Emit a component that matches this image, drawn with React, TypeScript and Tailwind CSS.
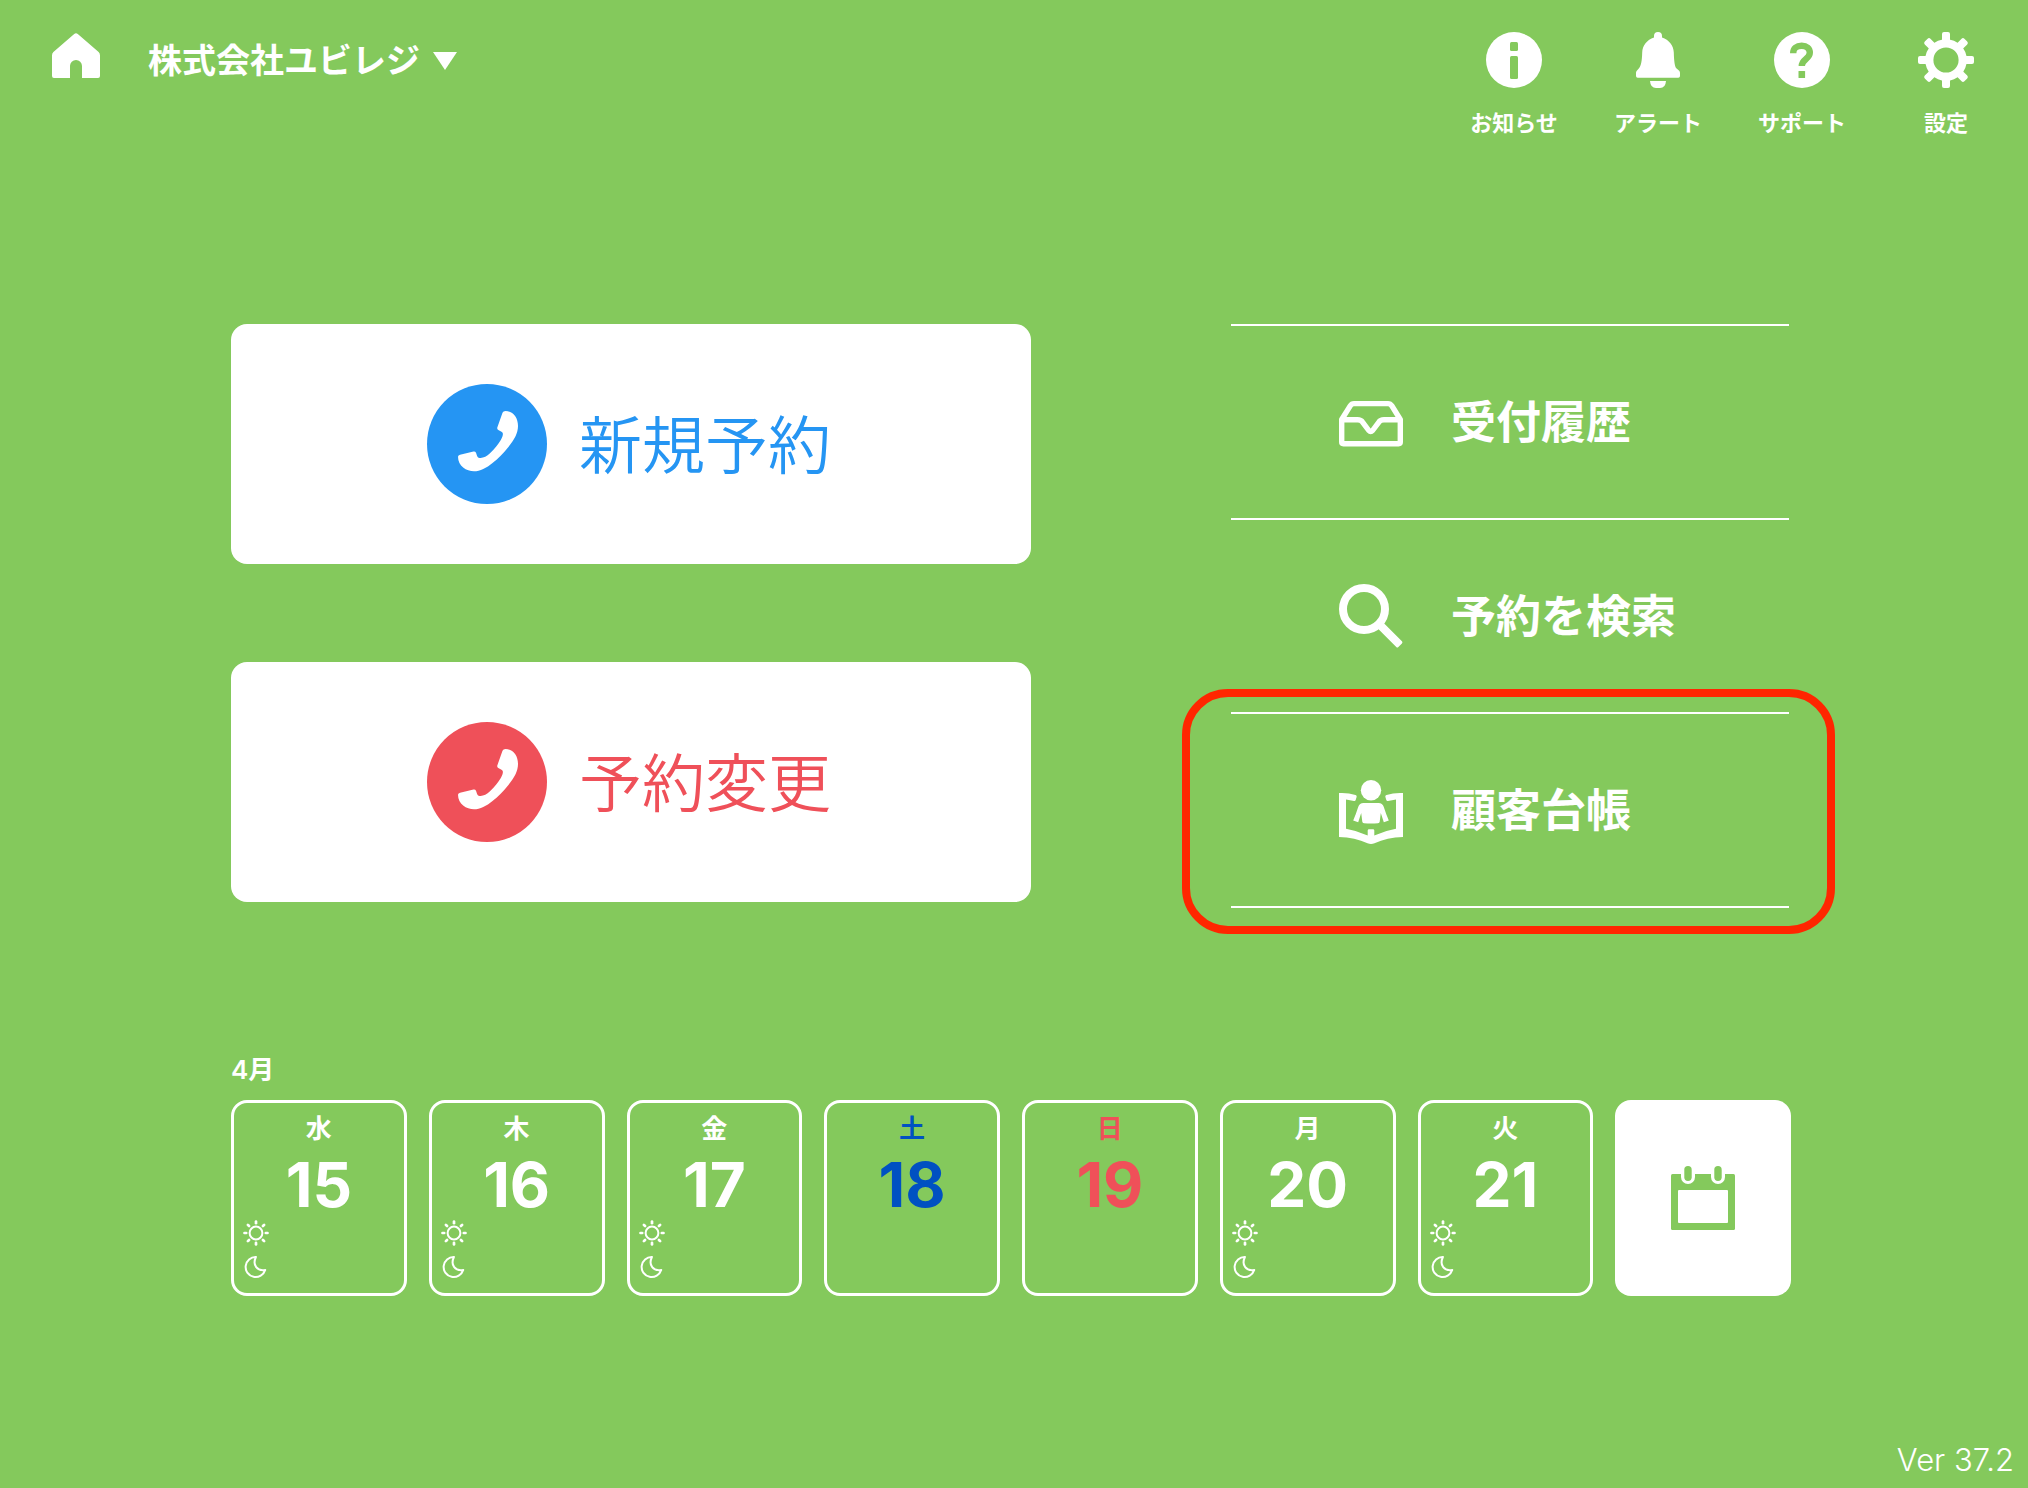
import type { ReactNode } from "react";

const TEETH = [0, 45, 90, 135, 180, 225, 270, 315];

function HomeIcon() {
  return (
    <svg viewBox="0 -1 48 46" className="h-[46px] w-12" fill="currentColor" aria-hidden="true">
      <path d="M22.2 1Q24-.6 25.8 1L46.6 19Q48 20.400 48 22.400V43Q48 45 46 45H30V33A6 6 0 0 0 18 33V45H2Q0 45 0 43V22.400Q0 20.400 1.400 19Z" />
    </svg>
  );
}

function InfoIcon() {
  return (
    <svg viewBox="0 0 56 56" className="size-14" aria-hidden="true">
      <circle cx="28" cy="28" r="28" fill="#fff" />
      <rect x="24" y="10" width="8" height="9" rx="1.500" fill="#84c95c" />
      <rect x="24" y="24" width="8" height="23" rx="1.500" fill="#84c95c" />
    </svg>
  );
}

function BellIcon() {
  return (
    <svg viewBox="0 0 56 56" className="size-14" fill="#fff" aria-hidden="true">
      <path d="M24 5.500V4A4 4 0 0 1 32 4V5.500C39 7.800 43.600 13.500 43.800 20.500C44 29 44.800 34.500 46.300 36.300L49.200 38.800Q50 39.700 50 41V44Q50 45.700 48.300 45.700H7.700Q6 45.700 6 44V41Q6 39.700 6.800 38.800L9 36.300C11 34 12 29 12.200 20.500C12.400 13.500 17 7.800 24 5.500Z" />
      <path d="M20 49H36Q35.500 56 30 56H26Q20.500 56 20 49Z" />
    </svg>
  );
}

function HelpIcon() {
  return (
    <svg viewBox="0 0 56 56" className="size-14" aria-hidden="true">
      <circle cx="28" cy="28" r="28" fill="#fff" />
      <path
        d="M19.200 21.300C19.200 16.300 22.500 13.700 27.700 13.700C32.800 13.700 35.800 16.300 35.800 20.800C35.800 27 27.800 27 27.800 34"
        fill="none"
        stroke="#84c95c"
        strokeWidth="6.400"
      />
      <rect x="24.500" y="39" width="6.600" height="7" rx="0.600" fill="#84c95c" />
    </svg>
  );
}

function GearIcon() {
  return (
    <svg viewBox="0 0 56 56" className="size-14" fill="#fff" aria-hidden="true">
      {TEETH.map((angle) => (
        <rect key={angle} x="24" y="0" width="8" height="12" rx="2" transform={`rotate(${angle} 28 28)`} />
      ))}
      <circle cx="28" cy="28" r="16.700" fill="none" stroke="#fff" strokeWidth="8.200" />
    </svg>
  );
}

function PhoneIcon() {
  return (
    <svg viewBox="0 0 120 120" className="size-[120px]" aria-hidden="true">
      <circle cx="60" cy="60" r="60" fill="currentColor" />
      <path
        d="M75.500 28.700Q76.200 27 78.500 27C86 27.300 91 33.500 91 42C91 49 87.500 55.500 81 63.500C76 69.500 71 75 65.500 79C59.500 84 53 87.300 47 87.300C39.500 87.300 31 82 31 72.700Q31.200 71.300 33 70.800L46.500 67.500Q48.300 67.200 49 68.800L50.200 72.200Q50.800 73.800 52.500 73.900C56 74.400 59.500 72.500 63 69.300C68 64.500 71.500 60 73.800 56C75.200 53.500 76 51.500 75.900 49.800Q75.700 48.500 74.500 47.800L71.300 46Q69.900 45.100 70.300 43.500Z"
        fill="#fff"
      />
    </svg>
  );
}

function InboxIcon() {
  return (
    <svg viewBox="0 0 64 64" className="size-16" fill="none" stroke="currentColor" strokeWidth="5.400" strokeLinejoin="round" aria-hidden="true">
      <path d="M2.700 29.500L11.200 15.800Q12.600 13.600 15 13.600H49Q51.400 13.600 52.800 15.800L61.300 29.500V52Q61.300 53.700 59.600 53.700H4.400Q2.700 53.700 2.700 52Z" />
      <path d="M3 29.800H18.500Q22 29.800 23.700 32.300L29.800 40.500Q31.700 42.500 33.600 40.500L39.700 32.300Q41.400 29.800 45 29.800H61" />
    </svg>
  );
}

function SearchIcon() {
  return (
    <svg viewBox="0 0 64 64" className="size-16" aria-hidden="true">
      <circle cx="25" cy="25" r="21" fill="none" stroke="currentColor" strokeWidth="8" />
      <rect x="57" y="-4" width="29.500" height="8" rx="1.500" transform="rotate(45)" fill="currentColor" />
    </svg>
  );
}

function LedgerIcon() {
  return (
    <svg viewBox="0 -4 64 68" className="h-[68px] w-16" fill="currentColor" aria-hidden="true">
      <circle cx="32" cy="10.200" r="10.200" />
      <path d="M0 13Q9 12.500 16.500 15Q18 15.600 17.600 17L16.700 20Q16.200 21.300 15 20.900L7 19.500V48.700Q18 50.500 28.700 55.500V50.500Q28.700 49.300 30 49.300H34Q35.300 49.300 35.300 50.500V55.500Q46 50.500 57 48.700V19.500L49 20.900Q47.800 21.300 47.300 20L46.400 17Q46 15.600 47.500 15Q55 12.500 64 13V57Q48 57.500 35.500 63.300Q32 64.700 28.500 63.300Q16 57.500 0 57Z" />
      <path d="M24.500 23H39.500Q43.500 23 44.800 27Q47 34 49.800 40.600L44.800 42.200L41.800 33L40.700 41.700Q40.500 43 39 43.200Q32 44 25 43.200Q23.500 43 23.300 41.700L22.200 33L19.200 42.200L14.200 40.600Q17 34 19.200 27Q20.500 23 24.500 23Z" />
    </svg>
  );
}

function CalendarIcon() {
  return (
    <svg viewBox="0 0 64 64" className="size-16" fill="#84c95c" aria-hidden="true">
      <rect y="8" width="64" height="56" rx="1.500" />
      <rect x="7" y="24" width="50" height="33" rx="1" fill="#fff" />
      <rect x="10" y="-3" width="14" height="21" rx="7" fill="#fff" />
      <rect x="40" y="-3" width="14" height="21" rx="7" fill="#fff" />
      <rect x="13.300" y="0" width="7.400" height="15" rx="3.700" />
      <rect x="43.300" y="0" width="7.400" height="15" rx="3.700" />
    </svg>
  );
}

function SunIcon() {
  return (
    <svg viewBox="0 0 26 26" className="size-[26px]" fill="none" stroke="currentColor" aria-hidden="true">
      <circle cx="13" cy="13" r="6.400" strokeWidth="2" />
      {TEETH.map((angle) => (
        <path key={angle} d="M13 1.500V3.200" strokeWidth="2.700" strokeLinecap="round" transform={`rotate(${angle} 13 13)`} />
      ))}
    </svg>
  );
}

function MoonIcon() {
  return (
    <svg viewBox="0 0 26 26" className="size-[26px]" fill="none" stroke="currentColor" strokeWidth="2" strokeLinejoin="round" aria-hidden="true">
      <path d="M12.900 3A10 10 0 1 0 22.200 15.900C14.500 17.300 9 11.500 12.900 3Z" />
    </svg>
  );
}

const tools = [
  { label: "お知らせ", icon: <InfoIcon /> },
  { label: "アラート", icon: <BellIcon /> },
  { label: "サポート", icon: <HelpIcon /> },
  { label: "設定", icon: <GearIcon /> },
];

const links = [
  { label: "受付履歴", icon: <InboxIcon />, marked: false },
  { label: "予約を検索", icon: <SearchIcon />, marked: false },
  { label: "顧客台帳", icon: <LedgerIcon />, marked: true },
];

const days = [
  { week: "水", date: 15, tone: "text-white", open: true },
  { week: "木", date: 16, tone: "text-white", open: true },
  { week: "金", date: 17, tone: "text-white", open: true },
  { week: "土", date: 18, tone: "text-[#0051c2]", open: false },
  { week: "日", date: 19, tone: "text-[#ef5059]", open: false },
  { week: "月", date: 20, tone: "text-white", open: true },
  { week: "火", date: 21, tone: "text-white", open: true },
];

function BookingButton({ tone, children }: { tone: string; children: ReactNode }) {
  return (
    <button type="button" className={`flex h-60 items-center justify-center gap-8 rounded-2xl bg-white ${tone}`}>
      <PhoneIcon />
      <span className="pt-0.5 pr-1 text-[63px] leading-[72px] font-[350]">{children}</span>
    </button>
  );
}

export default function App() {
  return (
    <div className="flex min-h-screen flex-col bg-[#84c95c] font-['Inter','Noto_Sans_CJK_JP',sans-serif] text-white">
      <header className="flex items-start justify-between pt-8 pr-2.5 pl-[52px]">
        <div className="flex items-start">
          <button type="button" aria-label="ホーム">
            <HomeIcon />
          </button>
          <label className="ml-12 flex items-center gap-[13px]">
            <select aria-label="店舗" className="appearance-none bg-transparent text-[34px] leading-[58px] font-semibold">
              <option>株式会社ユビレジ</option>
            </select>
            <svg viewBox="0 0 24 18" className="h-[18px] w-6" fill="currentColor" aria-hidden="true">
              <path d="M0 0H24L12 18Z" />
            </svg>
          </label>
        </div>
        <nav className="flex">
          {tools.map((tool) => (
            <button key={tool.label} type="button" className="flex w-36 flex-col items-center gap-[18px]">
              {tool.icon}
              <span className="text-[22px] leading-[34px] font-semibold">{tool.label}</span>
            </button>
          ))}
        </nav>
      </header>

      <main className="mt-[184px] flex flex-col pr-[237px] pl-[231px]">
        <div className="grid grid-cols-[800fr_560fr] items-start gap-x-[200px]">
          <div className="flex flex-col gap-[98px]">
            <BookingButton tone="text-[#2595f3]">新規予約</BookingButton>
            <BookingButton tone="text-[#ef5059]">予約変更</BookingButton>
          </div>
          <nav className="mr-0.5 border-t-2 border-white">
            {links.map((link) => (
              <div key={link.label} className="relative border-b-2 border-white">
                <a href="#" className="flex h-48 items-center gap-12 pl-[108px]">
                  {link.icon}
                  <span className="pt-0.5 text-[45px] leading-[56px] font-semibold">{link.label}</span>
                </a>
                {link.marked && (
                  <span className="pointer-events-none absolute -top-[25px] -right-[46px] -bottom-[28px] -left-[49px] rounded-[46px] border-8 border-[#ff2600]" />
                )}
              </div>
            ))}
          </nav>
        </div>

        <section className="mt-[140px]">
          <h2 className="pt-0.5 text-[26px] leading-10 font-semibold">4月</h2>
          <div className="mt-2.5 grid grid-cols-8 gap-x-[22px]">
            {days.map((day) => (
              <button
                key={day.date}
                type="button"
                className="flex h-[196px] flex-col items-center rounded-2xl border-3 border-white pt-2.5"
              >
                <span className={`text-[26px] leading-8 font-semibold ${day.tone}`}>{day.week}</span>
                <span className={`mt-2.5 text-[62px] leading-[60px] font-bold ${day.tone}`}>{day.date}</span>
                {day.open && (
                  <span className="mt-[5px] ml-[9px] flex flex-col gap-2 self-start">
                    <SunIcon />
                    <MoonIcon />
                  </span>
                )}
              </button>
            ))}
            <button type="button" aria-label="カレンダー" className="flex h-[196px] items-center justify-center rounded-2xl bg-white">
              <CalendarIcon />
            </button>
          </div>
        </section>
      </main>

      <footer className="mt-auto pr-3.5 pb-2 text-right text-[31px] leading-10 font-light">Ver 37.2</footer>
    </div>
  );
}
